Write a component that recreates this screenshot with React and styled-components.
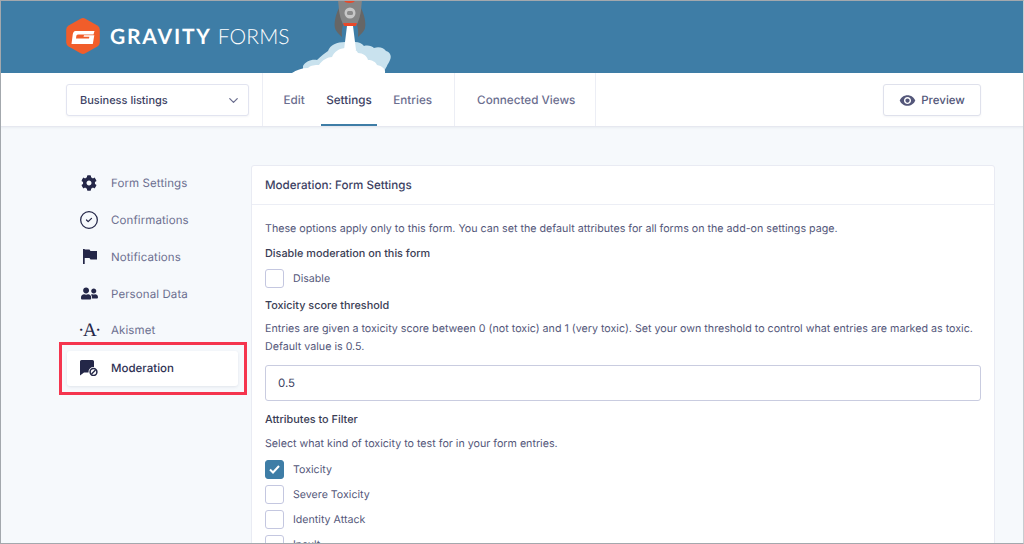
import React from "react";
import styled, { createGlobalStyle } from "styled-components";
import { FaCog, FaUserFriends } from "react-icons/fa";
import { MdVisibility } from "react-icons/md";
import { ChevronDown, CircleCheck } from "lucide-react";

const GlobalStyle = createGlobalStyle`
  html, body {
    margin: 0;
    padding: 0;
    background: #f6f9fc;
    font-family: Inter, "Liberation Sans", sans-serif;
    text-rendering: geometricPrecision;
    -webkit-font-smoothing: antialiased;
  }
  * { box-sizing: border-box; }
`;

const Page = styled.div`
  position: relative;
  width: 1024px;
  height: 544px;
  overflow: hidden;
  background: #f6f9fc;

  &::after {
    content: "";
    position: absolute;
    inset: 0;
    border: 1px solid #a3a8ad;
    border-right-color: #c8ccd0;
    pointer-events: none;
  }
`;

const Banner = styled.header`
  position: relative;
  height: 73px;
  background: #3e7da6;
  padding: 18px 0 0 66px;
`;

const Brand = styled.div`
  display: flex;
  align-items: center;
  gap: 10px;
  height: 36px;
`;

const Wordmark = styled.div`
  font-family: Lato, "Open Sans", sans-serif;
  font-size: 21px;
  line-height: 1;
  color: #fff;
  display: flex;
  gap: 6px;
`;

const WordBold = styled.span`
  font-weight: 700;
  letter-spacing: 1.8px;
`;

const WordLight = styled.span`
  font-weight: 300;
  letter-spacing: 0.1px;
`;

const RocketArt = styled.svg`
  position: absolute;
  left: 290px;
  top: 0;
  width: 105px;
  height: 73px;
`;

const NavBar = styled.nav`
  height: 54px;
  background: #fff;
  border-bottom: 1px solid #e6e8f0;
  box-shadow: 0 1px 2px rgba(40, 50, 90, 0.06);
  display: flex;
  padding: 0 43px 0 66px;
`;

const FormSelect = styled.div`
  width: 183px;
  height: 32px;
  margin-top: 11px;
  margin-right: 13px;
  padding: 0 7px 0 13px;
  display: flex;
  align-items: center;
  justify-content: space-between;
  background: #fff;
  border: 1px solid #e2e4f0;
  border-radius: 3px;
  box-shadow: 0 1px 2px rgba(40, 50, 90, 0.05);
  font-size: 11px;
  font-weight: 500;
  color: #3c3f63;
`;

const TabGroup = styled.div`
  display: flex;
  gap: 10.5px;
  border-left: 1px solid #eceef5;
  padding: ${(p) => p.$padding};
`;

const Tab = styled.div`
  height: 53px;
  padding: 2px 5.5px 0;
  display: flex;
  align-items: center;
  font-size: 11.7px;
  font-weight: 500;
  color: ${(p) => (p.$active ? "#3c3f63" : "#6b6e8f")};
  border-bottom: 2px solid ${(p) => (p.$active ? "#3e7da6" : "transparent")};
`;

const PreviewButton = styled.div`
  margin-left: auto;
  margin-top: 11px;
  width: 98px;
  height: 32px;
  display: flex;
  align-items: center;
  justify-content: center;
  gap: 5px;
  background: #fff;
  border: 1px solid #dfe1ec;
  border-radius: 3px;
  box-shadow: 0 1px 2px rgba(40, 50, 90, 0.05);
  font-size: 11.5px;
  font-weight: 500;
  color: #54577a;
`;

const Body = styled.div`
  display: flex;
  padding: 38px 0 0 59px;
`;

const Sidebar = styled.aside`
  width: 188px;
  margin-right: 4px;
`;

const SideItem = styled.div`
  height: 36.75px;
  margin: 0 8px;
  padding-left: 12px;
  display: flex;
  align-items: center;
  gap: 12px;
  font-size: 11.5px;
  font-weight: 400;
  color: #6b6e8f;
  letter-spacing: 0.1px;
`;

const IconSlot = styled.span`
  width: 20px;
  flex-shrink: 0;
  display: flex;
  justify-content: center;
  color: #242748;
`;

const AkismetGlyph = styled.span`
  font-family: "Liberation Serif", serif;
  font-size: 19px;
  letter-spacing: -1.5px;
  line-height: 1;
  white-space: nowrap;
  color: #242748;
`;

const Highlight = styled.div`
  height: 53px;
  margin-top: -7px;
  border: 3px solid #f5354e;
  padding: 6px 6px 6px 5px;
  background: #f6f9fc;
`;

const ActiveItem = styled.div`
  height: 35px;
  padding-left: 12px;
  display: flex;
  align-items: center;
  gap: 12px;
  background: #fff;
  border-radius: 3px;
  box-shadow: 0 1px 3px rgba(40, 50, 90, 0.1);
  font-size: 11.5px;
  font-weight: 500;
  color: #2f3254;
`;

const Card = styled.section`
  width: 744px;
  background: #fff;
  border: 1px solid #e9ebf3;
  border-radius: 3px;
  height: 420px;
`;

const CardHead = styled.h2`
  margin: 0;
  height: 39px;
  padding-left: 13px;
  display: flex;
  align-items: center;
  border-bottom: 1px solid #eceef5;
  font-size: 11.6px;
  font-weight: 500;
  color: #3c3f63;
`;

const CardBody = styled.div`
  padding: 15px 13px 0;
`;

const Note = styled.p`
  margin: 0 0 ${(p) => p.$after || 0}px;
  font-size: 10.7px;
  line-height: 18px;
  color: #54577a;
`;

const Label = styled.h3`
  margin: ${(p) => p.$before || 0}px 0 ${(p) => p.$after || 0}px;
  font-size: 10.85px;
  line-height: 18px;
  font-weight: 500;
  color: #3a3d55;
`;

const CheckRow = styled.label`
  height: 25px;
  display: flex;
  align-items: center;
  gap: 9px;
  font-size: 10.65px;
  color: #54577a;
`;

const Box = styled.span`
  width: 19px;
  height: 19px;
  display: flex;
  align-items: center;
  justify-content: center;
  border-radius: 3px;
  border: 1.5px solid ${(p) => (p.$checked ? "#3e7da6" : "#c4c7e0")};
  background: ${(p) => (p.$checked ? "#3e7da6" : "#fff")};
`;

const TextInput = styled.div`
  height: 36px;
  margin: 9px 0 9px;
  padding-left: 12px;
  display: flex;
  align-items: center;
  border: 1px solid #c9cce0;
  border-radius: 3px;
  font-size: 11.5px;
  color: #3c3f63;
`;

const attributes = [
  { name: "Toxicity", checked: true },
  { name: "Severe Toxicity" },
  { name: "Identity Attack" },
  { name: "Insult" },
];

const Logo = () => (
  <svg width="34" height="36" viewBox="0 0 34 36">
    <path
      d="M14.6 0.7a5 5 0 0 1 4.8 0l12 6.8a5 5 0 0 1 2.4 4.2v12.6a5 5 0 0 1-2.4 4.2l-12 6.8a5 5 0 0 1-4.8 0l-12-6.8A5 5 0 0 1 .2 24.3V11.7a5 5 0 0 1 2.4-4.2z"
      fill="#f15d2a"
    />
    <path
      d="M9.500 13H28.500L27.500 16.500H12.500C11.300 16.500 10.600 17 10.300 18L10 20.500H23L23.400 18.800H17.500L18 17.300H28.300L26.800 26H5.500L6.700 16.800C7 14.500 8 13 9.500 13Z"
      fill="#fff"
    />
  </svg>
);

const Rocket = () => (
  <RocketArt viewBox="290 0 105 73">
    <path
      d="M303 66c2-4 8-7 14-6 4-4 8-7 11-9 2-6 9-9 17-9 2-1 4 0 5 1 5-2 11-1 14 3 4-1 8 0 10 2 5-2 10 0 12 3 4 1 6 5 4 9-1 3-3 5-3 6l-4 7h-80z"
      fill="#c9e2ee"
    />
    <path
      d="M292 73c4-3 10-5 16-5 3-3 7-3 11-3 3-5 9-8 13-8 2-5 7-9 14-9 5-1 10 1 12 5 5 0 9 3 10 7 4 0 8 2 9 5 5 1 9 4 8 8z"
      fill="#fff"
    />
    <path d="M347 26h6l3 24h-12z" fill="#fff" />
    <path d="M339 8C335 16 334 24 335 28 336 32 340 35 342 37 341.500 32 342 28 343 25z" fill="#666" />
    <path d="M361 8C365 16 366 24 365 28 364 32 360 35 358 37 358.500 32 358 28 357 25z" fill="#666" />
    <path d="M338 0h24l-1 10c-.5 5-2 10-4 14h-14c-2-4-3.500-9-4-14z" fill="#858585" />
    <path d="M343 23h14l-1 3h-12z" fill="#e8492a" />
    <path d="M344 0h11c0 2-2 3-5.500 3S344 2 344 0z" fill="#e8492a" />
    <circle cx="350" cy="13" r="5.500" fill="#c7c7c7" />
    <rect x="347" y="11" width="6" height="4" rx="1.500" fill="#8b8b8b" />
  </RocketArt>
);

const FlagIcon = () => (
  <svg width="15" height="15" viewBox="0 0 15 15">
    <path d="M1 0h1.700v15H1z" fill="currentColor" />
    <path d="M2 .5h5.500l1 1.500H15v8.500H8.500l-1-1.500H2z" fill="currentColor" />
  </svg>
);

const ModerationIcon = () => (
  <svg width="18" height="16" viewBox="0 0 18 16">
    <path
      d="M1.500 0h11A1.500 1.500 0 0 1 14 1.500V7a5 5 0 0 0-5.500 5.500H4l-4 3V1.500A1.500 1.500 0 0 1 1.500 0z"
      fill="currentColor"
    />
    <circle cx="13.500" cy="12" r="3.400" fill="none" stroke="currentColor" strokeWidth="1.500" />
    <path d="M11.500 14l4-4" stroke="currentColor" strokeWidth="1.400" />
  </svg>
);

const CheckMark = () => (
  <svg width="11" height="9" viewBox="0 0 11 9">
    <path d="M1 4.500l3 3 6-6.500" fill="none" stroke="#fff" strokeWidth="2" />
  </svg>
);

const App = () => {
  return (
    <Page>
      <GlobalStyle />
      <Banner>
        <Brand>
          <Logo />
          <Wordmark>
            <WordBold>GRAVITY</WordBold>
            <WordLight>FORMS</WordLight>
          </Wordmark>
        </Brand>
        <Rocket />
      </Banner>

      <NavBar>
        <FormSelect>
          Business listings
          <ChevronDown size={15} color="#6b6e8f" />
        </FormSelect>
        <TabGroup $padding="0 16px 0 15px">
          <Tab>Edit</Tab>
          <Tab $active>Settings</Tab>
          <Tab>Entries</Tab>
        </TabGroup>
        <TabGroup $padding="0 14px 0 17px">
          <Tab>Connected Views</Tab>
        </TabGroup>
        <TabGroup $padding="0" />
        <PreviewButton>
          <MdVisibility size={17} />
          Preview
        </PreviewButton>
      </NavBar>

      <Body>
        <Sidebar>
          <SideItem>
            <IconSlot><FaCog size={16} /></IconSlot>
            Form Settings
          </SideItem>
          <SideItem>
            <IconSlot><CircleCheck size={20} strokeWidth={1.5} /></IconSlot>
            Confirmations
          </SideItem>
          <SideItem>
            <IconSlot><FlagIcon /></IconSlot>
            Notifications
          </SideItem>
          <SideItem>
            <IconSlot><FaUserFriends size={17} /></IconSlot>
            Personal Data
          </SideItem>
          <SideItem>
            <IconSlot><AkismetGlyph>·A·</AkismetGlyph></IconSlot>
            Akismet
          </SideItem>
          <Highlight>
            <ActiveItem>
              <IconSlot><ModerationIcon /></IconSlot>
              Moderation
            </ActiveItem>
          </Highlight>
        </Sidebar>

        <Card>
          <CardHead>Moderation: Form Settings</CardHead>
          <CardBody>
            <Note $after={6}>
              These options apply only to this form. You can set the default attributes for all forms on the add-on settings page.
            </Note>
            <Label $after={4}>Disable moderation on this form</Label>
            <CheckRow>
              <Box />
              Disable
            </CheckRow>
            <Label $before={5} $after={6}>Toxicity score threshold</Label>
            <Note>
              Entries are given a toxicity score between 0 (not toxic) and 1 (very toxic). Set your own threshold to control what entries are marked as toxic. Default value is 0.5.
            </Note>
            <TextInput>0.5</TextInput>
            <Label $after={7}>Attributes to Filter</Label>
            <Note $after={4}>Select what kind of toxicity to test for in your form entries.</Note>
            {attributes.map((a) => (
              <CheckRow key={a.name}>
                <Box $checked={a.checked}>{a.checked && <CheckMark />}</Box>
                {a.name}
              </CheckRow>
            ))}
          </CardBody>
        </Card>
      </Body>
    </Page>
  );
};

export default App;
